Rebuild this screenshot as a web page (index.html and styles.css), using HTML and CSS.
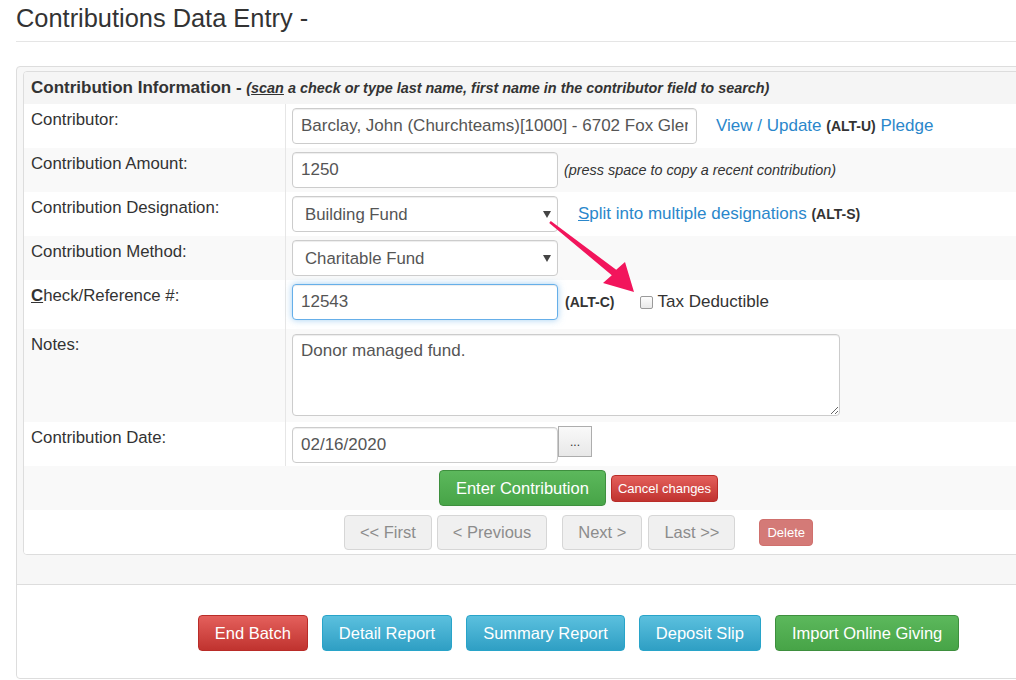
FILE: index.html
```html
<!DOCTYPE html>
<html>
<head>
<meta charset="utf-8">
<title>Contributions Data Entry</title>
<link rel="stylesheet" href="styles.css">
</head>
<body>
<div class="page">
  <h1 class="title">Contributions Data Entry -</h1>
  <hr class="rule">
  <div class="outer">
    <div class="panel">
      <div class="panel-head"><b>Contribution Information -</b> <i class="hint">(<u>scan</u> a check or type last name, first name in the contributor field to search)</i></div>

      <div class="row">
        <div class="lbl">Contributor:</div>
        <div class="fld">
          <input class="inp inp-wide" type="text" value="Barclay, John (Churchteams)[1000] - 6702 Fox Glen">
          <span class="after-link"><a class="lnk">View / Update</a> <b class="key">(ALT-U)</b> <a class="lnk">Pledge</a></span>
        </div>
      </div>

      <div class="row alt">
        <div class="lbl">Contribution Amount:</div>
        <div class="fld">
          <input class="inp" type="text" value="1250">
          <i class="note">(press space to copy a recent contribution)</i>
        </div>
      </div>

      <div class="row">
        <div class="lbl">Contribution Designation:</div>
        <div class="fld">
          <span class="sel-wrap"><select class="sel"><option>Building Fund</option></select></span>
          <span class="split"><a class="lnk"><u>S</u>plit into multiple designations</a> <b class="key">(ALT-S)</b></span>
        </div>
      </div>

      <div class="row alt">
        <div class="lbl">Contribution Method:</div>
        <div class="fld">
          <span class="sel-wrap"><select class="sel"><option>Charitable Fund</option></select></span>
        </div>
      </div>

      <div class="row row-check">
        <div class="lbl"><u class="bold-u">C</u>heck/Reference #:</div>
        <div class="fld">
          <input class="inp focus" type="text" value="12543">
          <b class="key key-c">(ALT-C)</b>
          <label class="chk"><input type="checkbox" class="box"> Tax Deductible</label>
        </div>
      </div>

      <div class="row alt row-notes">
        <div class="lbl">Notes:</div>
        <div class="fld fld-top">
          <textarea class="notes">Donor managed fund.</textarea>
        </div>
      </div>

      <div class="row row-date">
        <div class="lbl">Contribution Date:</div>
        <div class="fld fld-top">
          <input class="inp" type="text" value="02/16/2020">
          <button class="dots">...</button>
        </div>
      </div>

      <div class="row alt action-row">
        <button class="btn btn-green btn-enter">Enter Contribution</button>
        <button class="btn btn-red btn-small">Cancel changes</button>
      </div>

      <div class="row action-row nav-row">
        <button class="btn btn-off">&lt;&lt; First</button>
        <button class="btn btn-off">&lt; Previous</button>
        <button class="btn btn-off nav-next">Next &gt;</button>
        <button class="btn btn-off nav-last">Last &gt;&gt;</button>
        <button class="btn btn-del">Delete</button>
      </div>
    </div>

    <div class="footer">
      <button class="btn btn-red btn-foot">End Batch</button>
      <button class="btn btn-blue btn-foot">Detail Report</button>
      <button class="btn btn-blue btn-foot">Summary Report</button>
      <button class="btn btn-blue btn-foot">Deposit Slip</button>
      <button class="btn btn-green btn-foot">Import Online Giving</button>
    </div>
  </div>
</div>

<svg class="annot" width="1016" height="680" viewBox="0 0 1016 680">
  <polygon points="550.8,221 616.2,269.8 625,262 634,292 603,283 611.8,275.2 549.2,223" fill="#f2155c"/>
</svg>
</body>
</html>
```

FILE: styles.css
```css
html, body {
  margin: 0;
  padding: 0;
}
body {
  font-family: "Liberation Sans", Arial, sans-serif;
  color: #333;
  background: #fff;
  overflow: hidden;
  width: 1016px;
  height: 680px;
  position: relative;
}
.page {
  padding-left: 16px;
  width: 1125px;
}
.title {
  font-size: 25.4px;
  font-weight: normal;
  line-height: 34px;
  margin: 0;
  padding-top: 1px;
  color: #333;
}
.rule {
  border: 0;
  border-top: 1px solid #e5e5e5;
  margin: 6px 0 24px 0;
  height: 0;
}
.outer {
  border: 1px solid #ddd;
  border-radius: 4px;
  background: #f7f7f7;
  padding-top: 4px;
  box-sizing: border-box;
  width: 1125px;
}
.panel {
  margin: 0 6px 29px 6px;
  border: 1px solid #ddd;
  border-radius: 4px;
  background: #fff;
  overflow: hidden;
}
.panel-head {
  background: #f5f5f5;
  height: 32px;
  line-height: 31px;
  padding: 0 7px;
  font-size: 17px;
  white-space: nowrap;
}
.hint {
  font-size: 14.4px;
  font-weight: bold;
}
.row {
  display: flex;
  min-height: 44px;
  background: #fff;
}
.row.alt {
  background: #f9f9f9;
}
.lbl {
  width: 262px;
  flex: none;
  border-right: 1px solid #e6e6e6;
  padding: 6px 7px 0 7px;
  box-sizing: border-box;
  font-size: 16.8px;
  line-height: 20px;
}
.bold-u {
  font-weight: bold;
}
.fld {
  display: flex;
  align-items: center;
  padding: 4px 6px;
  flex: 1;
  white-space: nowrap;
}
.fld-top {
  align-items: flex-start;
}
.inp {
  height: 36px;
  width: 266px;
  box-sizing: border-box;
  border: 1px solid #ccc;
  border-radius: 4px;
  padding: 0 8px;
  font-family: "Liberation Sans", Arial, sans-serif;
  font-size: 17px;
  color: #555;
  box-shadow: inset 0 1px 1px rgba(0,0,0,.075);
  background: #fff;
  outline: none;
}
.inp-wide {
  width: 405px;
}
.inp.focus {
  border-color: #66afe9;
  box-shadow: inset 0 1px 1px rgba(0,0,0,.075), 0 0 7px rgba(102,175,233,.6);
}
.after-link {
  margin-left: 19px;
  font-size: 17px;
}
.lnk {
  color: #2a87cb;
  text-decoration: none;
}
.lnk u {
  text-decoration: underline;
}
.key {
  font-size: 14px;
  color: #333;
}
.note {
  margin-left: 6px;
  font-size: 14.4px;
  color: #333;
}
.sel-wrap {
  position: relative;
  display: inline-block;
}
.sel-wrap::after {
  content: "";
  position: absolute;
  right: 7px;
  top: 15px;
  border-left: 4px solid transparent;
  border-right: 4px solid transparent;
  border-top: 7px solid #444;
}
.sel {
  appearance: none;
  -webkit-appearance: none;
  height: 36px;
  width: 266px;
  border: 1px solid #ccc;
  border-radius: 4px;
  padding: 0 12px;
  font-family: "Liberation Sans", Arial, sans-serif;
  font-size: 16.8px;
  color: #555;
  background: #fff;
  box-shadow: inset 0 1px 1px rgba(0,0,0,.075);
}
.split {
  margin-left: 20px;
  font-size: 17px;
}
.row-check .fld {
  padding-bottom: 9px;
}
.key-c {
  margin-left: 7px;
}
.chk {
  margin-left: 25px;
  display: flex;
  align-items: center;
  font-size: 17px;
  color: #333;
}
.box {
  appearance: none;
  -webkit-appearance: none;
  width: 13px;
  height: 13px;
  margin: 0 5px 0 0;
  border: 1px solid #9a9a9a;
  border-radius: 2px;
  background: linear-gradient(#fdfdfd, #e9e9e9);
  box-sizing: border-box;
}
.row-notes .fld {
  padding: 5px 6px 6px 6px;
}
.notes {
  width: 548px;
  height: 82px;
  box-sizing: border-box;
  border: 1px solid #ccc;
  border-radius: 4px;
  padding: 6px 8px;
  font-family: "Liberation Sans", Arial, sans-serif;
  font-size: 17px;
  line-height: 20px;
  color: #555;
  box-shadow: inset 0 1px 1px rgba(0,0,0,.075);
  resize: vertical;
}
.row-date .fld {
  padding: 5px 6px 3px 6px;
}
.dots {
  width: 34px;
  height: 31px;
  margin-top: -1px;
  margin-left: 0;
  border: 1px solid #adadad;
  background: linear-gradient(#f9f9f9, #e8e8e8);
  font-family: "Liberation Sans", Arial, sans-serif;
  font-size: 12px;
  color: #333;
  padding: 0;
}
.action-row {
  justify-content: center;
  align-items: center;
  gap: 5px;
}
.btn {
  font-family: "Liberation Sans", Arial, sans-serif;
  border-radius: 4px;
  border: 1px solid transparent;
  cursor: pointer;
  box-sizing: border-box;
  white-space: nowrap;
}
.btn-enter {
  height: 36px;
  padding: 0 16px;
  font-size: 16.5px;
}
.btn-small {
  height: 27px;
  padding: 0 6px;
  font-size: 13px;
}
.btn-green {
  color: #fff;
  background: linear-gradient(#5cb85c, #47a447);
  border-color: #3e8f3e;
}
.btn-red {
  color: #fff;
  background: linear-gradient(#e4605c, #c0332f);
  border-color: #b92c28;
}
.btn-blue {
  color: #fff;
  background: linear-gradient(#5bc0de, #2f9fc4);
  border-color: #28a4c9;
}
.btn-off {
  height: 35px;
  padding: 0 15px;
  font-size: 16.5px;
  color: #8c8c8c;
  background: #f0f0f0;
  border-color: #d6d6d6;
}
.nav-next {
  margin-left: 10px;
}
.nav-last {
  margin-left: 1px;
}
.btn-del {
  margin-left: 19px;
  height: 27px;
  padding: 0 7px;
  font-size: 13px;
  color: #fff;
  background: #d47a77;
  border-color: #d0706d;
}
.footer {
  border-top: 1px solid #ddd;
  background: #fff;
  border-radius: 0 0 4px 4px;
  display: flex;
  justify-content: center;
  gap: 14px;
  padding: 30px 0 27px 0;
}
.btn-foot {
  height: 36px;
  padding: 0 16px;
  font-size: 16.5px;
}
.annot {
  position: absolute;
  left: 0;
  top: 0;
  pointer-events: none;
}
```
